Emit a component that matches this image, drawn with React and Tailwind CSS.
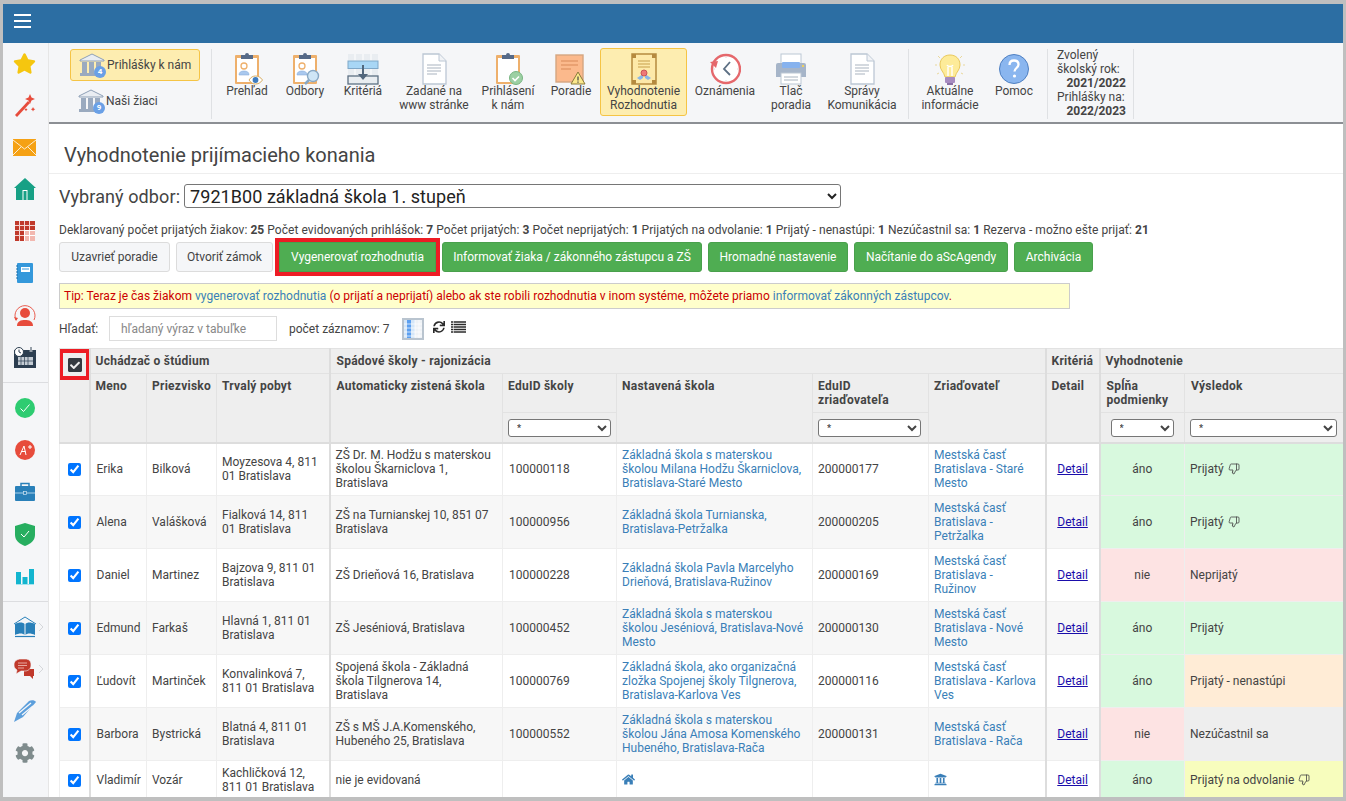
import React from "react";
import { FaStar, FaCog, FaHome, FaUniversity, FaSync, FaCheckSquare } from "react-icons/fa";
import { ThumbsDown } from "lucide-react";

const Clip = ({ children }) => (
  <svg width="32" height="32" viewBox="0 0 32 32">
    <rect x="4" y="2" width="24" height="29" rx="1" fill="#eeb06c" />
    <rect x="6" y="5" width="20" height="24" fill="#fff" />
    <path d="M10 2h4a2 2 0 0 1 4 0h4v4H10z" fill="#566a88" />
    {children}
  </svg>
);
const Person = () => (
  <g>
    <circle cx="13" cy="13" r="3" fill="#fff" stroke="#eeb06c" strokeWidth="1.3" />
    <path d="M8 22c0-3 2-4 5-4s5 1 5 4z" fill="#a9c8ee" stroke="#8db0dc" strokeWidth=".6" />
  </g>
);
const Doc = () => (
  <svg width="32" height="32" viewBox="0 0 32 32">
    <path d="M5 1h16l7 7v23H5z" fill="#fff" stroke="#bcc7d4" strokeWidth="1.3" />
    <path d="M21 1v7h7" fill="#f1f3f6" stroke="#bcc7d4" strokeWidth="1" />
    <path d="M9 12h14M9 15h14M9 18h14M9 21h10" stroke="#a9b4c0" strokeWidth="1.2" />
  </svg>
);
const ICONS = {
  prehlad: <Clip><Person /><path d="M18 27c2-3 4-4 6.500-4s5 1 7 4c-2 3-4.500 4-7 4s-4.500-1-6.500-4z" fill="#fff" stroke="#d8ad63" /><circle cx="24.500" cy="27" r="2.900" fill="#3f7cc0" /></Clip>,
  odbory: <Clip><Person /><circle cx="24" cy="23" r="5.5" fill="#cfe6f6" stroke="#88a8c4" strokeWidth="1.4" /><path d="M20 27l-4 4" stroke="#88a8c4" strokeWidth="2.5" /></Clip>,
  kriteria: (
    <svg width="32" height="32" viewBox="0 0 32 32">
      <rect x="1" y="1" width="30" height="30" fill="#e9edf1" />
      <path d="M8 1v30M16 1v30M24 1v30M1 8h30" stroke="#fff" />
      <rect x="1" y="8" width="30" height="7.5" fill="#a8d6f5" stroke="#7fa7c8" />
      <rect x="1" y="23" width="30" height="8" fill="#e9edf1" stroke="#5d7083" strokeWidth="1.3" />
      <path d="M16 12v13" stroke="#51667c" strokeWidth="2" /><path d="M11 21h10l-5 6z" fill="#51667c" />
    </svg>
  ),
  zadane: <Doc />,
  spravy: <Doc />,
  prihlasenie: <Clip><circle cx="24" cy="25" r="6.5" fill="#9cd0a3" stroke="#79b583" /><path d="M20.5 25l2.5 2.5 4-4" stroke="#fff" strokeWidth="1.6" fill="none" /></Clip>,
  poradie: (
    <svg width="32" height="32" viewBox="0 0 32 32">
      <rect x="1" y="2" width="27" height="27" fill="#fbb98c" stroke="#d5a681" strokeWidth="1.4" />
      <path d="M6 8h17M6 12h17M6 16h10" stroke="#d98a58" strokeWidth="1.2" />
      <path d="M23 19l7 12H16z" fill="#fbe88c" stroke="#8a7a3a" strokeWidth="1" />
      <path d="M23 23.5v4M23 28.6v1.2" stroke="#444" strokeWidth="1.2" />
    </svg>
  ),
  vyhodnotenie: (
    <svg width="32" height="32" viewBox="0 0 32 32">
      <rect x="4" y="1" width="24" height="30" fill="#fde9a9" stroke="#b58a3f" strokeWidth="1.5" />
      <path d="M4 1h4v4H4zM24 1h4v4h-4zM4 27h4v4H4zM24 27h4v4h-4z" fill="#b58a3f" />
      <path d="M10 8h12M10 11h12M10 14h12" stroke="#c8a04c" strokeWidth="1.2" />
      <path d="M9 25l6-4v4l-3 2zM23 25l-6-4v4l3 2z" fill="#8ab6e8" />
      <circle cx="16" cy="20" r="3" fill="#ee7777" stroke="#c95555" />
    </svg>
  ),
  oznamenia: (
    <svg width="32" height="32" viewBox="0 0 32 32">
      <circle cx="17" cy="16" r="14" fill="#fff" stroke="#e5686c" strokeWidth="2.4" />
      <path d="M1 9l8-1-2 7z" fill="#e5686c" />
      <path d="M21 9l-6 7 6 6" stroke="#5d7084" strokeWidth="1.8" fill="none" />
      <path d="M17 3.5v1.5M17 27v1.5M4.5 16H6M28 16h1.5" stroke="#d9d9d9" />
    </svg>
  ),
  tlac: (
    <svg width="32" height="32" viewBox="0 0 32 32">
      <rect x="6" y="1" width="20" height="12" fill="#fff" stroke="#bcc7d4" />
      <path d="M3 10h26a2 2 0 0 1 2 2v12H1V12a2 2 0 0 1 2-2z" fill="#a6b5c9" />
      <rect x="7" y="9" width="18" height="6" rx="1" fill="#86b2ee" />
      <rect x="6" y="20" width="20" height="11" fill="#fff" stroke="#bcc7d4" />
      <path d="M9 24h14M9 27h14" stroke="#a9b4c0" />
      <rect x="27" y="12" width="2" height="2" fill="#f0d060" />
    </svg>
  ),
  bulb: (
    <svg width="32" height="32" viewBox="0 0 32 32">
      <path d="M16 2c6 0 10 4 10 10 0 5-4 7-5 12H11c-1-5-5-7-5-12C6 6 10 2 16 2z" fill="#fdeb99" stroke="#e9c85c" />
      <path d="M14 23v-9M18 23v-9M13 12c1 2 5 2 6 0" stroke="#fff" strokeWidth="1.4" fill="none" />
      <rect x="11" y="24" width="10" height="6" rx="1" fill="#a78cc0" />
      <rect x="13" y="30" width="6" height="2" fill="#8a70a4" />
      <path d="M1 12h2M29 12h2M4 3l2 2M28 3l-2 2M3 21l2-1M29 21l-2-1" stroke="#e9d89c" />
    </svg>
  ),
  pomoc: (
    <svg width="32" height="32" viewBox="0 0 32 32">
      <circle cx="16" cy="16" r="14.5" fill="#8ab6ef" stroke="#4f80c2" />
      <path d="M11.5 12c0-3 2-4.500 4.500-4.500s4.500 1.500 4.500 4c0 3.500-4 3.500-4 7" stroke="#fff" strokeWidth="2.300" fill="none" />
      <circle cx="16.500" cy="23" r="1.600" fill="#fff" />
    </svg>
  ),
};

const Bank = ({ n }) => (
  <span className="relative block w-[26px] h-[24px] shrink-0">
    <svg width="26" height="24" viewBox="0 0 26 24">
      <path d="M13 1L25 7v1H1V7z" fill="#e9edf2" stroke="#8ea0b6" />
      <path d="M3 9h5v11H3zM10 9h5v11h-5zM17 9h5v11h-5z" fill="#9aaabf" />
      <rect x="1" y="20" width="24" height="3" fill="#9aaabf" />
    </svg>
    <span className="absolute right-[-1px] bottom-[-1px] w-[12px] h-[12px] rounded-full bg-[#6aa0e6] text-white text-[8px] leading-[12px] text-center font-bold">{n}</span>
  </span>
);

const SIDE = [
  [<FaStar size={23} color="#f5c60f" />],
  [<svg width="24" height="24" viewBox="0 0 24 24"><path d="M2 22L15 8l2 2L4 24z" fill="#e74c3c" /><path d="M17 1l1.500 3.500L22 6l-3.500 1.500L17 11l-1.500-3.500L12 6l3.500-1.500z" fill="#e74c3c" /><path d="M20 14l.8 1.500 1.500.7-1.500.8-.8 1.500-.7-1.500-1.500-.8 1.500-.7zM13 15l.6 1 1 .6-1 .6-.6 1-.6-1-1-.6 1-.6z" fill="#e74c3c" /></svg>],
  [<svg width="23" height="17" viewBox="0 0 23 17"><rect width="23" height="17" fill="#f5a114" /><path d="M0 1l11.500 9L23 1M0 16l8-8M23 16l-8-8" stroke="#fff" strokeWidth=".8" fill="none" /></svg>],
  [<svg width="22" height="22" viewBox="0 0 22 22"><path d="M11 0l11 10h-2v12H2V10H0z" fill="#17a085" /><rect x="8.500" y="12" width="5" height="10" fill="#fff" /><rect x="9.500" y="13" width="3" height="9" fill="#17a085" /></svg>],
  [<svg width="20" height="20" viewBox="0 0 20 20"><rect width="20" height="20" fill="#c0392b" /><path d="M4.500 0v20M9.500 0v20M14.500 0v20M0 4.500h20M0 9.500h20M0 14.500h20" stroke="#f4d4d0" /><rect x="9" y="9" width="11" height="11" fill="#f2b8b0" /><path d="M9.500 9v11M14.500 9v11M9 14.500h11M9 9.500h11" stroke="#fff" /></svg>],
  [<svg width="17" height="20" viewBox="0 0 17 20"><rect x="1" width="16" height="20" rx="1" fill="#3498db" /><rect x="5" y="4" width="9" height="5" fill="#fff" /><path d="M6 6h7" stroke="#3498db" /><path d="M0 3h2M0 6h2M0 9h2M0 12h2M0 15h2" stroke="#1d6fa8" /></svg>],
  [<svg width="22" height="22" viewBox="0 0 22 22"><path d="M2 16A10 10 0 1 1 20 16" fill="none" stroke="#e74c3c" strokeWidth=".9" /><path d="M0 13l4 1-2 3z" fill="#e74c3c" /><circle cx="11" cy="9" r="5" fill="#e74c3c" /><path d="M3 22c0-5 4-6 8-6s8 1 8 6z" fill="#e74c3c" /></svg>],
  [<svg width="22" height="21" viewBox="0 0 22 21"><rect y="3" width="22" height="18" fill="#2c3e50" /><path d="M17 0v5" stroke="#fff" strokeWidth="2.500" /><path d="M17 0v5" stroke="#2c3e50" /><rect x="4" y="10" width="15" height="8" fill="#c4ccd4" /><path d="M7 10v8M10.500 10v8M14 10v8M4 14h15" stroke="#2c3e50" strokeWidth=".7" /><circle cx="5" cy="5" r="4.500" fill="#fff" stroke="#2c3e50" /><path d="M5 2.500V5l2 1" stroke="#2c3e50" fill="none" /></svg>],
  "div",
  [<svg width="20" height="20" viewBox="0 0 20 20"><circle cx="10" cy="10" r="10" fill="#2ecc71" /><path d="M5.500 10.500l3 3 6-7" stroke="#fff" strokeWidth="1" fill="none" /></svg>],
  [<svg width="20" height="20" viewBox="0 0 20 20"><circle cx="10" cy="10" r="10" fill="#e74c3c" /><path d="M5 15l4-9 2 9M6.500 11.500h4M13 7h4M15 5v4" stroke="#fff" strokeWidth="1" fill="none" /></svg>],
  [<svg width="20" height="20" viewBox="0 0 20 20"><rect y="4" width="20" height="15" rx="1" fill="#2980b9" /><path d="M6 4V1.500h8V4" stroke="#2980b9" strokeWidth="1.500" fill="none" /><path d="M0 11h20" stroke="#a9cfe9" /><rect x="8.500" y="9.500" width="3" height="3" fill="#2980b9" stroke="#cfe3f1" strokeWidth=".7" /></svg>],
  [<svg width="20" height="23" viewBox="0 0 20 23"><path d="M10 0l10 3v9c0 6-5 9-10 11C5 21 0 18 0 12V3z" fill="#27ae60" /><path d="M6 11l3 3 5-6" stroke="#fff" strokeWidth="1" fill="none" /></svg>],
  [<svg width="18" height="18" viewBox="0 0 18 18"><path d="M0 5h5v13H0zM6.500 10h5v8h-5zM13 2h5v16h-5z" fill="#13b5cf" /><path d="M0 17.500h18" stroke="#a5e4ef" /></svg>],
  "div",
  [<svg width="22" height="22" viewBox="0 0 22 22"><path d="M0 8L11 1l11 7" stroke="#2980b9" fill="none" /><path d="M1 8c4-2 8-2 9.500 0v11C9 17 5 17 1 19zM21 8c-4-2-8-2-9.500 0v11c1.500-2 5.500-2 9.500 0z" fill="#2980b9" /><path d="M1 20.500h20" stroke="#2980b9" strokeWidth="1.200" /></svg>, true],
  [<svg width="21" height="21" viewBox="0 0 21 21"><path d="M10 10h10v7h-1v3l-3-3h-6z" fill="#c0392b" /><path d="M7 0h4c4 0 6 2 6 6s-3 6-6 6H7l-5 3 1-4C1 10 0 8 0 6c0-4 3-6 7-6z" fill="#c0392b" stroke="#f5f6f8" strokeWidth=".6" /><path d="M4 4h9M4 6.500h9M4 9h6" stroke="#e8a8a0" /></svg>, true],
  [<svg width="22" height="22" viewBox="0 0 22 22"><path d="M0 22l3-9L15 1c2-1 6-1 7 1L9 17zM4 14l5 4" fill="#5c9fdc" /><path d="M5 13L17 3M8 15L19 6" stroke="#f5f6f8" strokeWidth="1.300" /></svg>],
  [<FaCog size={20} color="#7f8c8d" />],
];

const ToolItem = ({ w, icon, lines, active }) => (
  <div className={`flex flex-col items-center pt-[6px] ${w} ${active ? "bg-[#fdedb0] border border-[#f5c445] rounded-[3px] h-[68px] mt-[3px] !pt-[4px]" : "h-[75px] mt-[2px]"}`}>
    <span className="block h-[32px]">{ICONS[icon]}</span>
    <span className="block text-center mt-[-1px] leading-[14px] whitespace-nowrap">
      {lines.map((l) => <span key={l} className="block">{l}</span>)}
    </span>
  </div>
);

const Sep = () => <div className="w-px h-[70px] bg-[#dfe1e4] mt-[4px]" />;

const ROWS = [
  ["Erika", "Bilková", "Moyzesova 4, 811 01 Bratislava", "ZŠ Dr. M. Hodžu s materskou školou Škarniclova 1, Bratislava", "100000118", "Základná škola s materskou školou Milana Hodžu Škarniclova, Bratislava-Staré Mesto", "200000177", "Mestská časť Bratislava - Staré Mesto", "áno", "Prijatý", "g", true],
  ["Alena", "Valášková", "Fialková 14, 811 01 Bratislava", "ZŠ na Turnianskej 10, 851 07 Bratislava", "100000956", "Základná škola Turnianska, Bratislava-Petržalka", "200000205", "Mestská časť Bratislava - Petržalka", "áno", "Prijatý", "g", true],
  ["Daniel", "Martinez", "Bajzova 9, 811 01 Bratislava", "ZŠ Drieňová 16, Bratislava", "100000228", "Základná škola Pavla Marcelyho Drieňová, Bratislava-Ružinov", "200000169", <>Mestská časť Bratislava -<br />Ružinov</>, "nie", "Neprijatý", "r", false],
  ["Edmund", "Farkaš", "Hlavná 1, 811 01 Bratislava", "ZŠ Jeséniová, Bratislava", "100000452", "Základná škola s materskou školou Jeséniová, Bratislava-Nové Mesto", "200000130", "Mestská časť Bratislava - Nové Mesto", "áno", "Prijatý", "g", false],
  ["Ľudovít", "Martinček", "Konvalinková 7, 811 01 Bratislava", <>Spojená škola - Základná škola Tilgnerova 14,<br />Bratislava</>, "100000769", "Základná škola, ako organizačná zložka Spojenej školy Tilgnerova, Bratislava-Karlova Ves", "200000116", "Mestská časť Bratislava - Karlova Ves", "áno", "Prijatý - nenastúpi", "o", false],
  ["Barbora", "Bystrická", "Blatná 4, 811 01 Bratislava", "ZŠ s MŠ J.A.Komenského, Hubeného 25, Bratislava", "100000552", "Základná škola s materskou školou Jána Amosa Komenského Hubeného, Bratislava-Rača", "200000131", "Mestská časť Bratislava - Rača", "nie", "Nezúčastnil sa", "s", false],
  ["Vladimír", "Vozár", "Kachličková 12, 811 01 Bratislava", "nie je evidovaná", "", null, "", null, "áno", "Prijatý na odvolanie", "y", true],
];
const RES = { g: "bg-[#d8f9de]", r: "bg-[#fde3e3]", o: "bg-[#ffecd6]", s: "bg-[#eeeeee]", y: "bg-[#f7fdbd]" };
const COND = { áno: "bg-[#d8f9de]", nie: "bg-[#fde3e3]" };

const th = "bg-[#eeeeee] border border-[#e2e2e2] px-[5px] text-left align-top font-bold text-[#444] tracking-[0.25px]";
const th2 = `${th} pt-[5px] leading-[14px]`;
const td = "border border-[#eeeeee] px-[5px] py-0 align-middle overflow-hidden";
const groupL = "!border-l-2 !border-l-[#dddddd]";

const Filter = ({ w }) => (
  <select className={`${w} h-[18px] bg-white border border-[#767676] rounded-[3px] text-[9px] leading-[10px] pl-[4px] text-[#444]`}>
    <option>*</option>
  </select>
);

const Btn = ({ children, green, marked, w }) => (
  <button
    className={`${w} h-[30px] text-[12px] border whitespace-nowrap ${
      green ? "bg-[#4fad52] border-[#49a04c] text-white" : "bg-[#f5f6f8] border-[#dcdcdc] text-[#444]"
    } ${marked ? "rounded-none outline-[4px] outline-solid outline-[#ed1c24]" : "rounded-[3px]"}`}
  >
    {children}
  </button>
);

export default function App() {
  return (
    <div className="w-[1346px] h-[801px] overflow-hidden bg-[#bfbfbf] pt-[4px] pl-[3px] pr-[3px] pb-[4px] flex flex-col text-[12px] text-[#444]" style={{ fontFamily: "Roboto, 'Liberation Sans', sans-serif" }}>
      <header className="h-[39px] shrink-0 bg-[#2c6ea3] pl-[11px] pt-[10px] flex flex-col gap-[4px]">
        <span className="block w-[17px] h-[2px] bg-white" />
        <span className="block w-[17px] h-[2px] bg-white" />
        <span className="block w-[17px] h-[2px] bg-white" />
      </header>
      <div className="flex flex-1 min-h-0">
        <aside className="w-[46px] shrink-0 bg-[#f5f6f8] border-r border-[#e6e6e6] overflow-hidden">
          <div className="mt-[-1px]">
            {SIDE.map((s, i) =>
              s === "div" ? (
                <div key={i} className="h-[9px] flex items-center"><div className="h-px w-full bg-[#dcdde0] mt-[-1px]" /></div>
              ) : (
                <div key={i} className="relative h-[42px] flex items-center justify-center pr-[2px]">
                  {s[0]}
                  {s[1] && <svg className="absolute right-[4px] top-[16px]" width="6" height="10" viewBox="0 0 6 10"><path d="M1 1l4 4-4 4" stroke="#d5d7da" fill="none" /></svg>}
                </div>
              )
            )}
          </div>
        </aside>
        <main className="flex-1 min-w-0 bg-white flex flex-col">
          <nav className="h-[81px] shrink-0 bg-[#f5f6f8] border-b-2 border-[#8c8f94] flex pt-[2px]">
            <div className="w-[162px] pl-[21px] pt-[4px] flex flex-col gap-[4px]">
              <div className="w-[130px] h-[32px] bg-[#fdedb0] border border-[#f5c445] rounded-[3px] flex items-center pl-[8px] gap-[2px]"><Bank n="4" /><span>Prihlášky k nám</span></div>
              <div className="w-[130px] h-[32px] flex items-center pl-[8px] gap-[2px]"><Bank n="9" /><span>Naši žiaci</span></div>
            </div>
            <Sep />
            <ToolItem w="w-[70px]" icon="prehlad" lines={["Prehľad"]} />
            <ToolItem w="w-[46px]" icon="odbory" lines={["Odbory"]} />
            <ToolItem w="w-[70px]" icon="kriteria" lines={["Kritériá"]} />
            <ToolItem w="w-[72px]" icon="zadane" lines={["Zadané na", "www stránke"]} />
            <ToolItem w="w-[76px]" icon="prihlasenie" lines={["Prihlásení", "k nám"]} />
            <ToolItem w="w-[50px]" icon="poradie" lines={["Poradie"]} />
            <div className="w-[4px]" />
            <ToolItem w="w-[87px]" icon="vyhodnotenie" lines={["Vyhodnotenie", "Rozhodnutia"]} active />
            <ToolItem w="w-[76px]" icon="oznamenia" lines={["Oznámenia"]} />
            <ToolItem w="w-[56px]" icon="tlac" lines={["Tlač", "poradia"]} />
            <ToolItem w="w-[86px]" icon="spravy" lines={["Správy", "Komunikácia"]} />
            <div className="w-[3px]" />
            <Sep />
            <ToolItem w="w-[82px]" icon="bulb" lines={["Aktuálne", "informácie"]} />
            <ToolItem w="w-[46px]" icon="pomoc" lines={["Pomoc"]} />
            <div className="w-[10px]" />
            <Sep />
            <div className="w-[85px] pl-[9px] pt-[3px] leading-[14px]">
              <div>Zvolený</div>
              <div>školský rok:</div>
              <div className="text-right pr-[7px] font-bold">2021/2022</div>
              <div>Prihlášky na:</div>
              <div className="text-right pr-[7px] font-bold">2022/2023</div>
            </div>
            <Sep />
          </nav>
          <div className="h-[50px] shrink-0 pl-[15px] pt-[19px] border-b border-[#eeeeee] text-[20px] leading-[24px]">Vyhodnotenie prijímacieho konania</div>
          <div className="pl-[10px] flex-1 min-h-0 overflow-hidden">
            <div className="h-[24px] mt-[10px] flex items-center gap-[4px] text-[18px] tracking-[0.1px]">
              <span>Vybraný odbor:</span>
              <select className="w-[657px] h-[24px] bg-white border border-[#767676] rounded-[3px] text-[18px] text-[#222] pl-[1px] tracking-[0.05px]">
                <option>7921B00 základná škola 1. stupeň</option>
              </select>
            </div>
            <div className="mt-[15px] h-[14px] leading-[14px] whitespace-nowrap tracking-[0.05px]">
              Deklarovaný počet prijatých žiakov: <b>25</b> Počet evidovaných prihlášok: <b>7</b> Počet prijatých: <b>3</b> Počet neprijatých: <b>1</b> Prijatých na odvolanie: <b>1</b> Prijatý - nenastúpi: <b>1</b> Nezúčastnil sa: <b>1</b> Rezerva - možno ešte prijať: <b>21</b>
            </div>
            <div className="mt-[5px] flex gap-[6px]">
              <Btn w="w-[111px]">Uzavrieť poradie</Btn>
              <Btn w="w-[97px]">Otvoriť zámok</Btn>
              <Btn w="w-[157px]" green marked>Vygenerovať rozhodnutia</Btn>
              <Btn w="w-[260px]" green>Informovať žiaka / zákonného zástupcu a ZŠ</Btn>
              <Btn w="w-[140px]" green>Hromadné nastavenie</Btn>
              <Btn w="w-[154px]" green>Načítanie do aScAgendy</Btn>
              <Btn w="w-[79px]" green>Archivácia</Btn>
            </div>
            <div className="mt-[11px] w-[1011px] h-[26px] bg-[#ffffcc] border border-[#cccccc] pl-[4px] leading-[24px] text-[#cc0000] whitespace-nowrap tracking-[0.012px]">
              Tip: Teraz je čas žiakom <span className="text-[#3a7fb8]">vygenerovať rozhodnutia</span> (o prijatí a neprijatí) alebo ak ste robili rozhodnutia v inom systéme, môžete priamo <span className="text-[#3a7fb8]">informovať zákonných zástupcov</span>.
            </div>
            <div className="mt-[7px] h-[25px] flex items-center">
              <span className="w-[50px]">Hľadať:</span>
              <input readOnly placeholder="hľadaný výraz v tabuľke" className="w-[168px] h-[25px] border border-[#dddddd] pl-[11px] placeholder:text-[#888] outline-none" />
              <span className="ml-[12px] w-[113px]">počet záznamov: 7</span>
              <svg width="22" height="22" viewBox="0 0 22 22">
                <rect width="22" height="22" fill="#b9c4cf" />
                <rect x="2" y="2" width="18" height="18" fill="#eef2f6" />
                <rect x="2" y="2" width="3" height="18" fill="#d5e6f8" />
                <rect x="5" y="2" width="4" height="18" fill="#5b9ff0" />
                <rect x="9" y="2" width="4" height="18" fill="#d5e6f8" />
                <path d="M13 2v18M17 2v18M2 6h18M2 10h18M2 14h18M2 18h18" stroke="#fff" strokeWidth=".7" />
              </svg>
              <FaSync size={12} color="#2b2b2b" className="ml-[9px] mt-[-4px]" />
              <svg width="15" height="12" viewBox="0 0 15 12" className="ml-[6px] mt-[-4px]">
                <path d="M0 1h15M0 3.500h15M0 6h15M0 8.500h15M0 11h15" stroke="#2b2b2b" strokeWidth="1.500" />
                <path d="M2.500 0v12" stroke="#fff" strokeWidth=".6" />
              </svg>
            </div>
            <table className="mt-[7px] table-fixed border-collapse w-[1284px]">
              <colgroup>
                {[30, 57, 70, 113, 173, 114, 196, 116, 117, 54, 85, 159].map((w, i) => <col key={i} style={{ width: w }} />)}
              </colgroup>
              <thead>
                <tr className="h-[25px]">
                  <th rowSpan={3} className={`${th} !p-0`}>
                    <div className="h-[31px] w-[31px] ml-[-1px] border-[4px] border-[#ed1c24] flex items-center justify-center"><FaCheckSquare size={16} color="#343a40" /></div>
                  </th>
                  <th colSpan={3} className={`${th} ${groupL} !align-middle`}>Uchádzač o štúdium</th>
                  <th colSpan={5} className={`${th} ${groupL} !pl-[6px] !align-middle`}>Spádové školy - rajonizácia</th>
                  <th className={`${th} ${groupL} !align-middle`}>Kritériá</th>
                  <th colSpan={2} className={`${th} ${groupL} !align-middle`}>Vyhodnotenie</th>
                </tr>
                <tr className="h-[39px]">
                  <th rowSpan={2} className={`${th2} ${groupL}`}>Meno</th>
                  <th rowSpan={2} className={th2}>Priezvisko</th>
                  <th rowSpan={2} className={th2}>Trvalý pobyt</th>
                  <th rowSpan={2} className={`${th2} ${groupL} !pl-[6px]`}>Automaticky zistená škola</th>
                  <th className={th2}>EduID školy</th>
                  <th rowSpan={2} className={th2}>Nastavená škola</th>
                  <th className={th2}>EduID zriaďovateľa</th>
                  <th rowSpan={2} className={th2}>Zriaďovateľ</th>
                  <th rowSpan={2} className={`${th2} ${groupL}`}>Detail</th>
                  <th className={`${th2} ${groupL} !pl-[6px]`}>Spĺňa podmienky</th>
                  <th className={`${th2} !pl-[6px]`}>Výsledok</th>
                </tr>
                <tr className="h-[30px] border-b-2 border-[#dddddd]">
                  <th className={`${th} !align-middle`}><Filter w="w-[103px]" /></th>
                  <th className={`${th} !align-middle`}><Filter w="w-[103px]" /></th>
                  <th className={`${th} ${groupL} !pl-[10px] !pr-0 !align-middle`}><Filter w="w-[63px]" /></th>
                  <th className={`${th} !align-middle`}><Filter w="w-[147px]" /></th>
                </tr>
              </thead>
              <tbody>
                {ROWS.map((r, i) => (
                  <tr key={r[0]} className={`${i === 6 ? "h-[38px]" : "h-[53px]"} leading-[14px] ${i % 2 ? "bg-[#f7f7f7]" : "bg-white"}`}>
                    <td className={`${td} text-center`}><input type="checkbox" checked readOnly className="align-middle" /></td>
                    <td className={`${td} ${groupL} !pl-[6px]`}>{r[0]}</td>
                    <td className={td}>{r[1]}</td>
                    <td className={td}>{r[2]}</td>
                    <td className={`${td} ${groupL}`}>{r[3]}</td>
                    <td className={`${td} !pl-[6px]`}>{r[4]}</td>
                    <td className={`${td} text-[#3a7fb8]`}>{r[5] || <FaHome size={13} color="#3a7fb8" />}</td>
                    <td className={td}>{r[6]}</td>
                    <td className={`${td} text-[#3a7fb8]`}>{r[7] || <FaUniversity size={13} color="#3a7fb8" />}</td>
                    <td className={`${td} ${groupL} text-center`}><span className="underline text-[#1a0dab]">Detail</span></td>
                    <td className={`${td} ${groupL} text-center ${COND[r[8]]}`}>{r[8]}</td>
                    <td className={`${td} ${RES[r[10]]}`}>{r[9]}{r[11] && <ThumbsDown size={12} strokeWidth={1.6} className="inline ml-[4px] align-[-2px]" />}</td>
                  </tr>
                ))}
              </tbody>
            </table>
          </div>
        </main>
      </div>
    </div>
  );
}
